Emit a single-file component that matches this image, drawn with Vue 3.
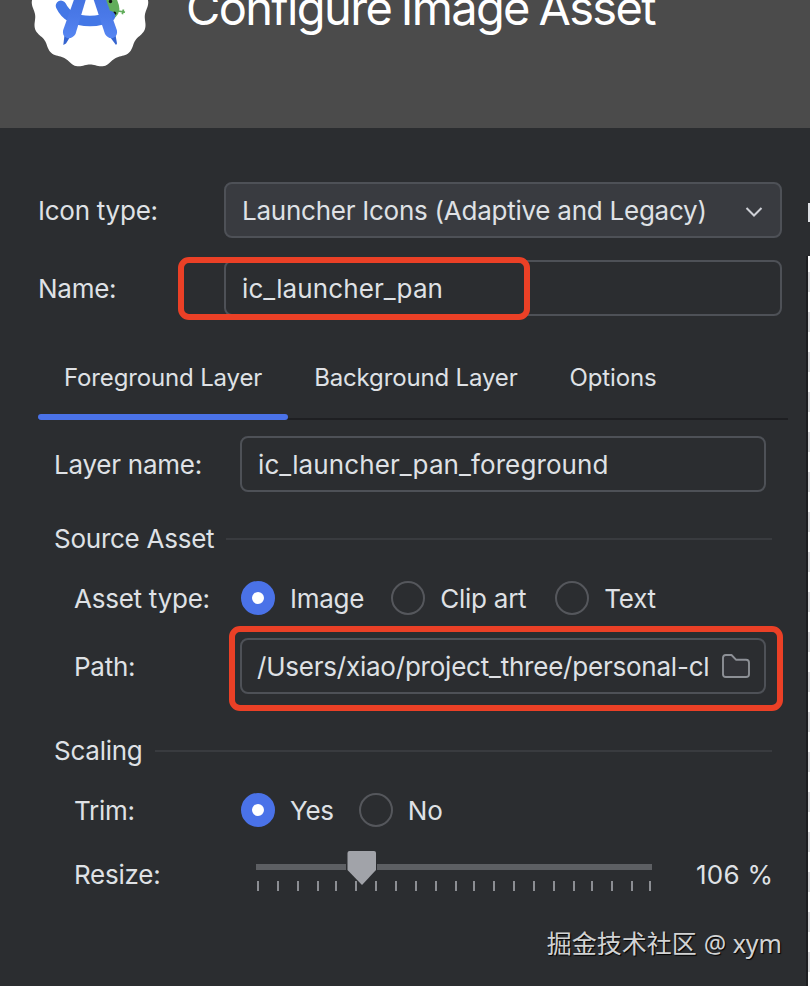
<script setup>
import { ref } from 'vue'

const tabs = ['Foreground Layer', 'Background Layer', 'Options']
const activeTab = ref('Foreground Layer')
const assetTypes = ['Image', 'Clip art', 'Text']
const assetType = ref('Image')
const trims = ['Yes', 'No']
const trim = ref('Yes')
const ticks = [2, 22, 42, 62, 80, 100, 120, 140, 160, 180, 200, 218, 238, 258, 278, 298, 318, 336, 356, 376, 394]

// Scalloped badge outline: a circle whose radius ripples thirteen times.
const points = []
for (let i = 0; i < 260; i++) {
  const a = (i / 260) * Math.PI * 2
  const r = 57.8 - 1.7 * Math.cos(13 * a)
  points.push(`${(60 + 0.985 * r * Math.sin(a)).toFixed(2)},${(60.3 + r * Math.cos(a)).toFixed(2)}`)
}
const badge = points.join(' ')
</script>

<template>
  <div class="window">
    <header class="banner">
      <svg class="logo" width="120" height="120" viewBox="0 0 120 120">
        <defs>
          <linearGradient id="leg" x1="0" y1="0" x2="0" y2="1">
            <stop offset="0" stop-color="#3f6fdd" />
            <stop offset="0.6" stop-color="#4a79e8" />
            <stop offset="1" stop-color="#5686f2" />
          </linearGradient>
        </defs>
        <polygon :points="badge" fill="#fff" />
        <path d="M72 44 H83 Q90 56 89.3 62 Q88 70 79 72 Z" fill="#62ad5b" />
        <path d="M88 63 L95 64.2 M93.5 61.5 L92.3 66.3" stroke="#62ad5b" stroke-width="1.7" fill="none" />
        <circle cx="80.5" cy="53.5" r="1.7" fill="#111" />
        <circle cx="84.5" cy="65.3" r="1.7" fill="#111" />
        <path d="M31 57.8 Q38 73 60 73 Q72 73 80 68" fill="none" stroke="#4377e6" stroke-width="10.5" stroke-linecap="round" />
        <path d="M34.5 87 L40 89 L36 95.5 L33.3 97 Z M80 89 L85.5 87 L87 95.5 L86 97 Z" fill="#3564cf" />
        <path d="M49.5 36 L60.5 36 L45.5 86 Q42.5 91 37 90 Q32 88 33.2 82 Z" fill="url(#leg)" />
        <path d="M58.5 36 L70.5 36 L86.8 82 Q88 88 83 90 Q78 91 75 86 Z" fill="url(#leg)" />
      </svg>
      <h1>Configure Image Asset</h1>
    </header>

    <div class="content">
      <main class="panel">
        <div class="row">
          <span class="label">Icon type:</span>
          <div class="field select">
            <span class="text">Launcher Icons (Adaptive and Legacy)</span>
            <svg class="chevron" width="18" height="12" viewBox="0 0 18 12"><path d="M1.5 2 L9 9.5 L16.5 2" fill="none" stroke="#ced0d6" stroke-width="2" /></svg>
          </div>
        </div>
        <div class="row name-row">
          <span class="label">Name:</span>
          <div class="field"><span class="text file">ic_launcher_pan</span></div>
          <i class="mark mark-name"></i>
        </div>

        <nav class="tabs">
          <span v-for="t in tabs" :key="t" class="tab" :class="{ active: t === activeTab }" @click="activeTab = t">{{ t }}</span>
        </nav>

        <section class="layer">
          <div class="row">
            <span class="label">Layer name:</span>
            <div class="field"><span class="text file">ic_launcher_pan_foreground</span></div>
          </div>
          <h2 class="group">Source Asset</h2>
          <div class="row indented asset-row">
            <span class="label">Asset type:</span>
            <div class="radios">
              <span v-for="o in assetTypes" :key="o" class="option" @click="assetType = o"><i class="radio" :class="{ on: o === assetType }"></i><span class="text">{{ o }}</span></span>
            </div>
          </div>
          <div class="row indented path-row">
            <span class="label">Path:</span>
            <div class="field path">
              <span class="text">/Users/xiao/project_three/personal-cl</span>
              <svg width="30" height="26" viewBox="0 0 30 26"><path d="M2 4.8 Q2 2 4.8 2 H10.5 L15.2 6.8 H25 Q28 6.8 28 9.8 V21.2 Q28 24 25 24 H4.8 Q2 24 2 21.2 Z" fill="#323338" stroke="#8d9096" stroke-width="1.9" stroke-linejoin="round" /></svg>
            </div>
            <i class="mark mark-path"></i>
          </div>
          <h2 class="group scaling">Scaling</h2>
          <div class="row indented trim-row">
            <span class="label">Trim:</span>
            <div class="radios">
              <span v-for="o in trims" :key="o" class="option" @click="trim = o"><i class="radio" :class="{ on: o === trim }"></i><span class="text">{{ o }}</span></span>
            </div>
          </div>
          <div class="row indented resize-row">
            <span class="label">Resize:</span>
            <svg class="slider" width="398" height="44" viewBox="0 0 398 44">
              <rect x="0" y="14" width="396" height="6" fill="#5d5f63" />
              <path v-for="x in ticks" :key="x" :d="`M${x} 31 V41`" stroke="#8c8e93" stroke-width="2" />
              <path d="M90 1 H121 V21 L106 36 L90 21 Z" fill="#2b2d30" />
              <path d="M93.5 1 H118 Q120 1 120 3 V20 L106 35 L91.5 20 V3 Q91.5 1 93.5 1 Z" fill="#a1a3a9" />
            </svg>
            <span class="percent">106 %</span>
          </div>
        </section>
        <footer class="watermark"><span class="han">掘金技术社区</span><span class="user">@ xym</span></footer>
      </main>
      <aside class="preview">
        <i class="chip"></i>
        <i class="checker"></i>
      </aside>
    </div>
  </div>
</template>

<style>
body { background: #2b2d30; }
</style>

<style scoped>
.window { width: 810px; height: 986px; overflow: hidden; display: flex; flex-direction: column; background: #2b2d30; color: #dfe1e5; font: 26px/32px Inter, "Noto Sans CJK SC", sans-serif; letter-spacing: -0.25px; white-space: nowrap; }
.banner { flex: none; height: 128px; background: #4b4b4b; display: flex; align-items: flex-start; padding-left: 30px; }
.logo { flex: none; margin-top: -52px; }
h1 { margin: -21px 0 0 36px; font-size: 47px; line-height: 58px; font-weight: 400; color: #fff; letter-spacing: -1.65px; word-spacing: -2px; }
.content { display: flex; height: 858px; }
.panel { width: 806px; box-sizing: border-box; padding-top: 54px; }
.row { position: relative; display: flex; align-items: center; height: 56px; padding-left: 38px; }
.label { width: 186px; flex: none; padding-top: 2px; }
.text { padding-top: 2px; }
.file { letter-spacing: 0.1px; }
.field { width: 558px; height: 56px; box-sizing: border-box; border: 2px solid #4e5157; border-radius: 8px; display: flex; align-items: center; justify-content: space-between; padding: 0 17px 0 16px; overflow: hidden; }
.select { background: #393b40; }
.chevron { margin-top: 3px; }
.name-row { margin-top: 22px; }
.mark { position: absolute; box-sizing: border-box; border: 6px solid #eb4026; border-radius: 11px; }
.mark-name { left: 178px; top: -3px; width: 352px; height: 63px; }
.mark-path { left: 229px; top: -12px; width: 554px; height: 85px; }
.tabs { display: flex; height: 84px; margin: 20px 18px 0 38px; font-size: 24px; letter-spacing: -0.15px; box-sizing: border-box; border-bottom: 2px solid #1e1f22; }
.tab { position: relative; padding: 26px 26px 0; line-height: 32px; }
.tab.active::after { content: ""; position: absolute; left: 0; right: 0; bottom: -2px; height: 6px; border-radius: 3px; background: #4a72e8; }
.layer { padding-top: 16px; }
.layer .row { padding-left: 54px; }
.layer .field { width: 526px; }
.layer .row.indented { padding-left: 74px; }
.indented .label { width: 166px; }
.group { display: flex; align-items: center; height: 32px; margin: 31px 34px 0 54px; font-size: 26px; font-weight: 400; }
.group::after { content: ""; flex: 1; height: 2px; margin-left: 12px; background: #393b3f; }
.layer .asset-row { height: 34px; margin-top: 26px; }
.path-row { margin-top: 23px; }
.scaling { margin-top: 41px; }
.layer .trim-row { height: 34px; margin-top: 26px; }
.layer .resize-row { height: 44px; margin-top: 23px; }
.resize-row .label { padding-top: 6px; }
.radios { display: flex; gap: 27px; padding-left: 1px; }
.asset-row .option:last-child { margin-left: 2px; }
.trim-row .radios { gap: 25px; }
.option { display: flex; align-items: center; height: 34px; }
.radio { width: 34px; height: 34px; box-sizing: border-box; border: 2px solid #55575c; border-radius: 50%; margin-right: 15px; }
.radio.on { border: 11px solid #4a72e8; background: #fff; }
.field.path { padding: 0 13px 0 15px; }
.field.path .text { letter-spacing: -0.22px; }
.slider { flex: none; margin-left: 16px; }
.percent { margin-left: 42px; padding-top: 6px; letter-spacing: 0.25px; }
.watermark { display: flex; justify-content: flex-end; align-items: center; gap: 7px; margin: 31px 24px 0 0; font: 25px/36px "Noto Sans", "Noto Sans CJK SC", sans-serif; letter-spacing: 0; color: #d2d3d4; text-shadow: 1px 1px 1px #000; }
.preview { width: 4px; display: flex; flex-direction: column; }
.chip { height: 19px; width: 2px; margin: 75px 0 34px 2px; background: #dfe1e5; }
.checker { flex: 1; box-sizing: border-box; border-left: 2px solid #1e1f22; background: repeating-linear-gradient(#fff 0 16px, #dcdcde 16px 36px, #fff 36px 40px); }
</style>
